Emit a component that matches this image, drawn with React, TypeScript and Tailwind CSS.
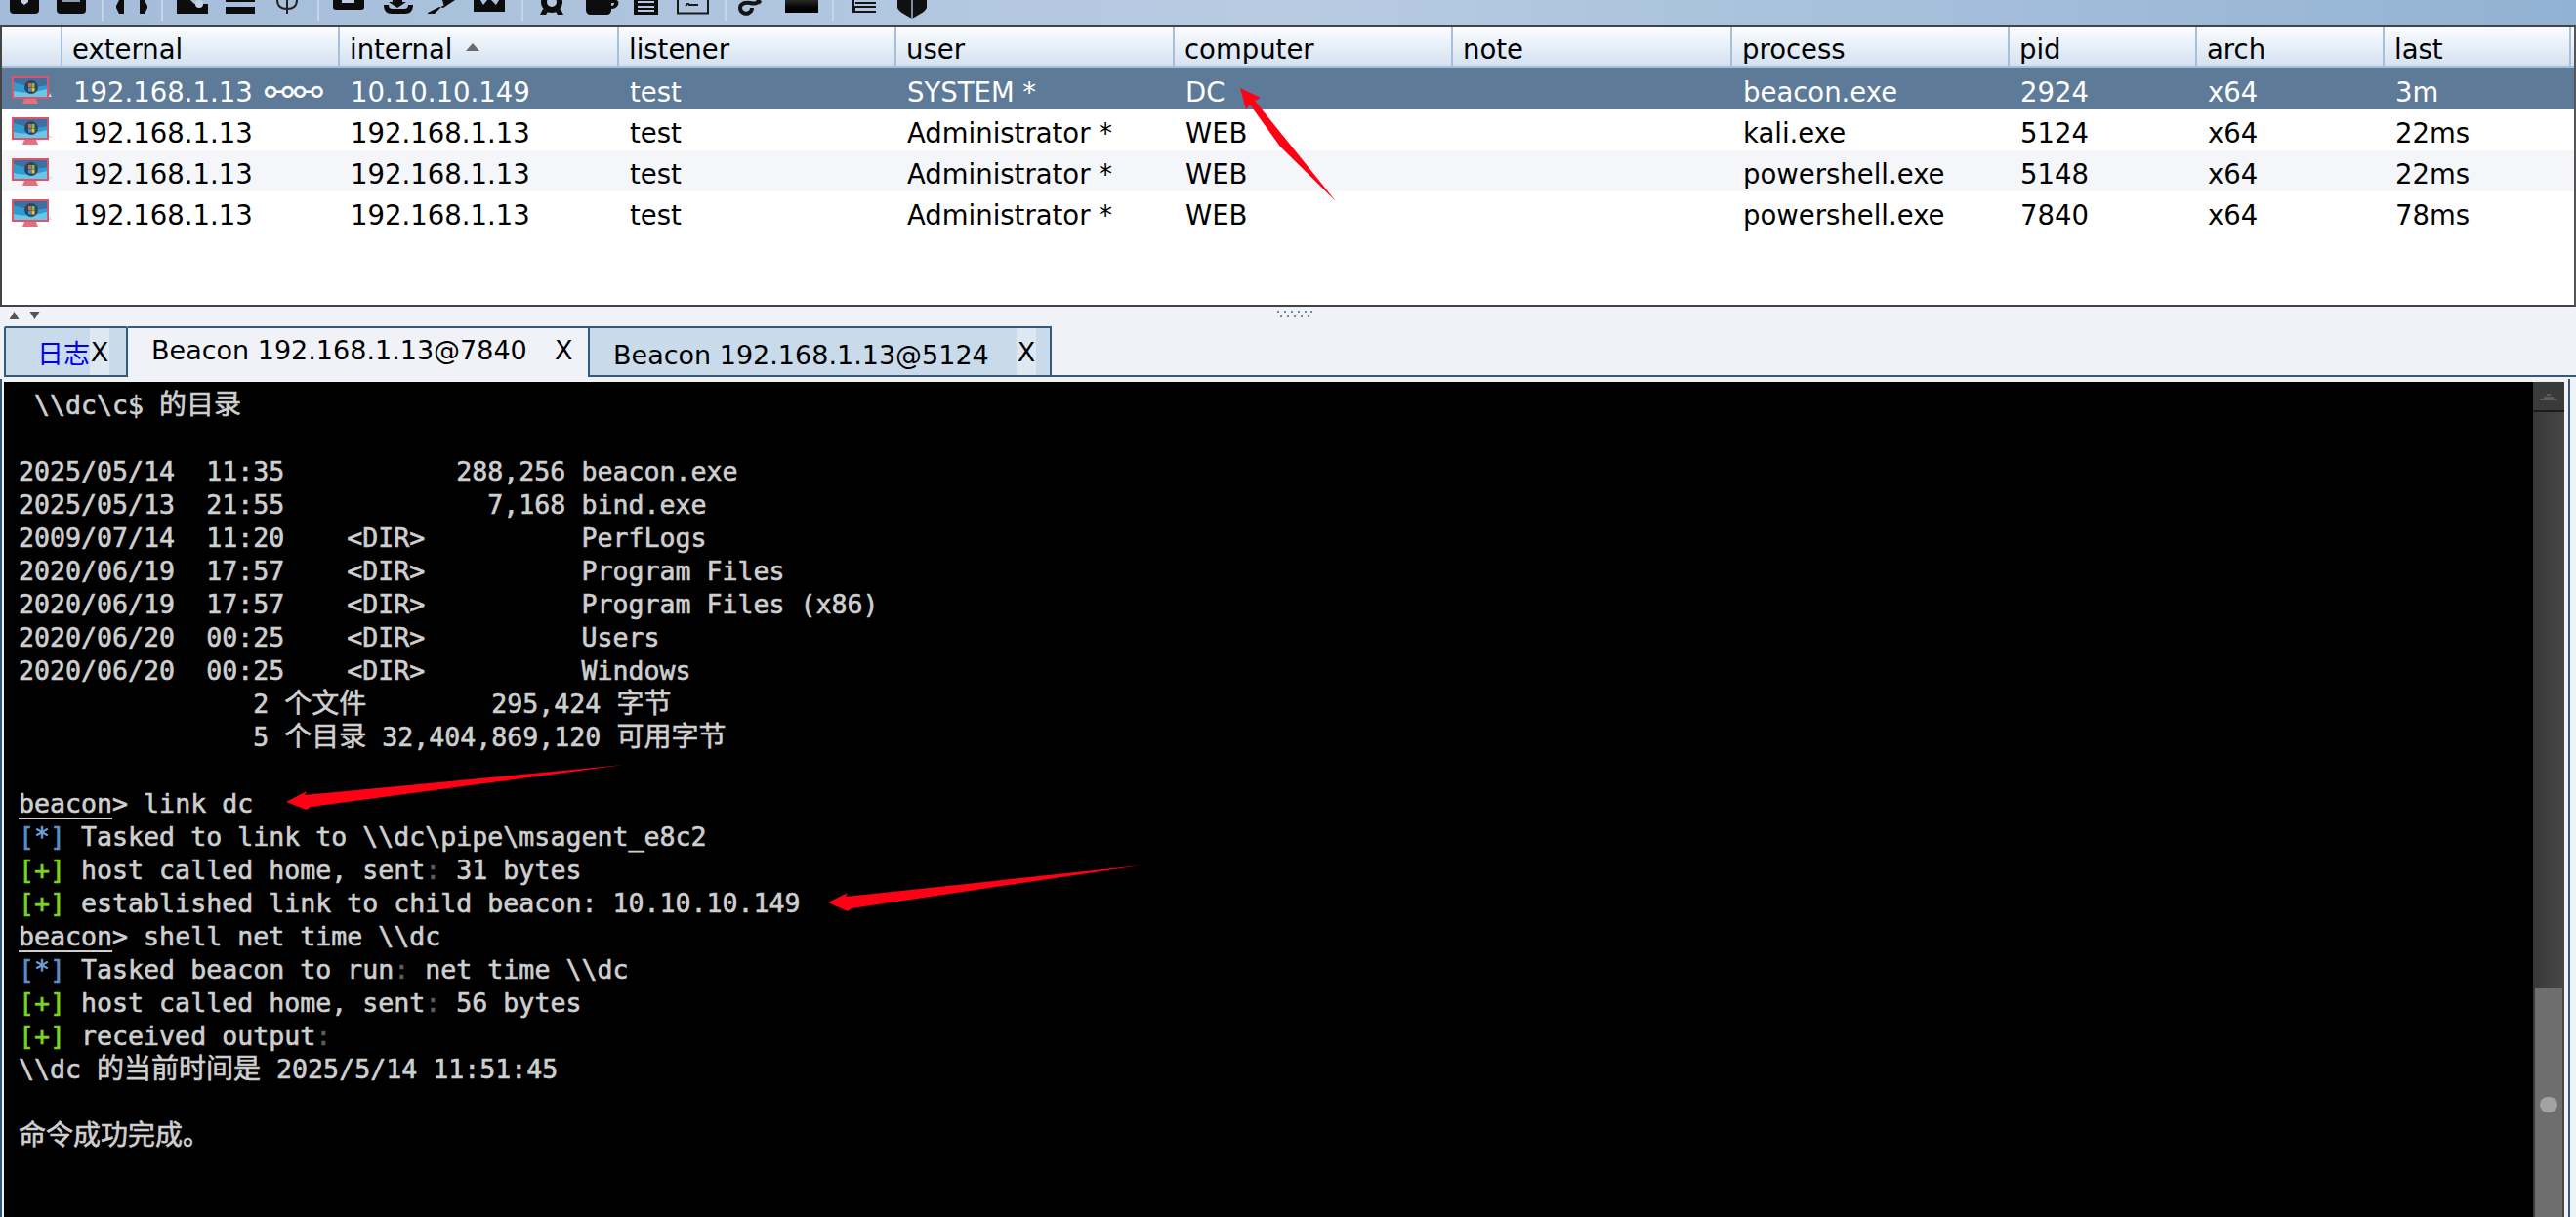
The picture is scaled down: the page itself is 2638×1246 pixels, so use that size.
import type { ReactNode } from "react";

const mono = "[font-family:'DejaVu_Sans_Mono','Noto_Sans_CJK_SC',monospace]";

const columns = [
  "external",
  "internal",
  "listener",
  "user",
  "computer",
  "note",
  "process",
  "pid",
  "arch",
  "last",
];

const sessions = [
  ["192.168.1.13", "10.10.10.149", "test", "SYSTEM *", "DC", "", "beacon.exe", "2924", "x64", "3m"],
  ["192.168.1.13", "192.168.1.13", "test", "Administrator *", "WEB", "", "kali.exe", "5124", "x64", "22ms"],
  ["192.168.1.13", "192.168.1.13", "test", "Administrator *", "WEB", "", "powershell.exe", "5148", "x64", "22ms"],
  ["192.168.1.13", "192.168.1.13", "test", "Administrator *", "WEB", "", "powershell.exe", "7840", "x64", "78ms"],
];

const gridCols =
  "grid-cols-[62px_284px_286px_284px_285px_285px_286px_284px_192px_192px_191px]";

function Zh({ children }: { children: ReactNode }) {
  return <span className="inline-block text-[28px] leading-[34px]">{children}</span>;
}

function Info() {
  return (
    <span className="text-[#5b8fc9]">
      [<span className="text-[#6fa3dc]">*</span>]
    </span>
  );
}

function Plus() {
  return <span className="text-[#7ed321]">[+]</span>;
}

function Dim() {
  return <span className="text-[#5c5c5c]">:</span>;
}

function Prompt() {
  return (
    <>
      <span className="underline decoration-2 underline-offset-[5px]">beacon</span>&gt;
    </>
  );
}

function Line({ children }: { children?: ReactNode }) {
  return <div className="h-[34px] whitespace-pre leading-[34px]">{children}</div>;
}

function MonitorIcon() {
  return (
    <svg width="42" height="32" viewBox="0 0 42 32" className="mt-[7px] ml-[9px]">
      <rect x="1" y="1" width="38" height="23" fill="#d9566b" />
      <rect x="3" y="3" width="34" height="19" fill="#2f9ccf" />
      <path d="M3 3h34v7c-10 3-22 1-34-3z" fill="#3f6f9f" />
      <path d="M3 16c12 3 24 1 34-2v8H3z" fill="#6cc4e6" />
      <circle cx="21" cy="12" r="7" fill="#2c4660" />
      <rect x="18" y="8" width="3" height="4" fill="#e3673a" />
      <rect x="21.500" y="8" width="3" height="4" fill="#8dbb3c" />
      <rect x="18" y="12.500" width="3" height="4" fill="#3e8fd6" />
      <rect x="21.500" y="12.500" width="3" height="4" fill="#eec23b" />
      <path d="M14 24h12l2 5H12z" fill="#e2707f" />
      <path d="M40 18l2 4h-3z" fill="#d8dee6" />
    </svg>
  );
}

function Toolbar() {
  return (
    <div className="flex h-[26px] shrink-0 items-start overflow-hidden bg-gradient-to-r from-[#a3bcd9] via-[#b8cbe3] to-[#92b2d3]">
      <svg width="30" height="26" className="ml-[10px]">
        <rect x="0" y="-8" width="30" height="22" rx="4" fill="#0c0c0c" />
        <path d="M11 0h8v2l-4 3-4-3z" fill="#c4d2e4" />
      </svg>
      <svg width="30" height="26" className="ml-[18px]">
        <rect x="0" y="-8" width="30" height="22" rx="4" fill="#0c0c0c" />
        <rect x="6" y="0" width="18" height="2" fill="#8c9bb0" />
      </svg>
      <div className="ml-[16px] h-[22px] w-[2px] bg-[#c6d5e6]" />
      <svg width="32" height="26" className="ml-[13px]">
        <path d="M0 6 3 0h5v14H3L0 8zM32 6l-3-6h-5v14h5l3-6z" fill="#0c0c0c" />
      </svg>
      <div className="ml-[14px] h-[22px] w-[2px] bg-[#c6d5e6]" />
      <svg width="32" height="26" className="ml-[14px]">
        <path d="M0 0h14l4 4h14v10H0z" fill="#0c0c0c" />
        <circle cx="23" cy="4" r="4" fill="#c4d2e4" />
      </svg>
      <svg width="30" height="26" className="ml-[18px]">
        <rect x="0" y="0" width="30" height="2" fill="#0c0c0c" />
        <rect x="0" y="7" width="30" height="7" fill="#0c0c0c" />
      </svg>
      <svg width="22" height="26" className="ml-[22px]">
        <path d="M1 0c0 6 4 9 10 9s10-3 10-9" fill="none" stroke="#222" strokeWidth="2" />
        <rect x="10" y="0" width="2" height="14" fill="#222" />
      </svg>
      <div className="ml-[20px] h-[22px] w-[2px] bg-[#c6d5e6]" />
      <svg width="32" height="26" className="ml-[14px]">
        <rect x="0" y="-10" width="32" height="20" rx="3" fill="#0c0c0c" />
        <rect x="9" y="0" width="13" height="3" fill="#c0d0e2" />
      </svg>
      <svg width="32" height="26" className="ml-[19px]">
        <path d="M10 0h10v2h4l-9 6-9-6h4z" fill="#0c0c0c" />
        <path d="M1 5c0 6 3 9 8 9h14c5 0 8-3 8-9h-5c0 3-2 4-4 4H10C8 9 6 8 6 5z" fill="#0c0c0c" />
      </svg>
      <svg width="30" height="26" className="ml-[13px]">
        <path d="M29 0 17 8l-4-1L1 13v1h7l8-8 5-1 8-5z" fill="#0c0c0c" />
        <path d="M16 0h13L18 7z" fill="#0c0c0c" />
      </svg>
      <svg width="32" height="26" className="ml-[18px]">
        <path d="M0 0h7l3 5 4-5h4l5 5 3-5h6v12H0z" fill="#0c0c0c" />
      </svg>
      <div className="ml-[17px] h-[22px] w-[2px] bg-[#c6d5e6]" />
      <svg width="34" height="26" className="ml-[12px]">
        <circle cx="17" cy="2" r="11" fill="#0c0c0c" />
        <circle cx="17" cy="2" r="5" fill="#b5c8e0" />
        <path d="M8 9l-3 6h6l2-3zM26 9l3 6h-6l-2-3z" fill="#0c0c0c" />
      </svg>
      <svg width="34" height="26" className="ml-[18px]">
        <path d="M0 0h26v10c0 3-2 5-5 5H5c-3 0-5-2-5-5z" fill="#0c0c0c" />
        <path d="M26 0h4c3 0 4 2 3 5-1 2-3 4-7 4V6c2 0 3-1 3-3h-3z" fill="#0c0c0c" />
      </svg>
      <svg width="25" height="26" className="ml-[15px]">
        <rect x="0" y="0" width="25" height="15" fill="#0c0c0c" />
        <rect x="4" y="1" width="17" height="2" fill="#b5c8e0" />
        <rect x="4" y="6" width="17" height="2" fill="#b5c8e0" />
        <rect x="4" y="10" width="17" height="2" fill="#b5c8e0" />
      </svg>
      <svg width="33" height="26" className="ml-[19px]">
        <rect x="1" y="-4" width="31" height="17.500" fill="none" stroke="#1a1a1a" strokeWidth="2" />
        <path d="M9 4h2l-2 2M12 5h10" fill="none" stroke="#1a1a1a" strokeWidth="2" />
      </svg>
      <div className="ml-[16px] h-[22px] w-[2px] bg-[#c6d5e6]" />
      <svg width="26" height="26" className="ml-[11px]">
        <path d="M22 0c-1 4-5 4-9 3C8 2 3 4 3 8c0 5 6 7 9 5 2-1 3-3 3-5M20 0l4 3" fill="none" stroke="#141414" strokeWidth="4" />
      </svg>
      <div className="ml-[23px] h-[13px] w-[34px] bg-gradient-to-b from-[#2a2a2a] to-black" />
      <div className="ml-[14px] h-[22px] w-[2px] bg-[#c6d5e6]" />
      <svg width="24" height="26" className="ml-[19px]">
        <path d="M0 6h24v2H3v3h21v2H0zM0 0h2v6H0z" fill="#141414" />
        <rect x="3" y="2" width="21" height="2" fill="#141414" />
      </svg>
      <svg width="30" height="26" className="ml-[22px]">
        <path d="M0 0h30v7c0 4-6 7-15 12C6 14 0 11 0 7z" fill="#101010" />
        <rect x="14" y="0" width="2" height="19" fill="#7f8ea3" />
      </svg>
    </div>
  );
}

function SessionTable() {
  return (
    <div className="h-[288px] shrink-0 border-x-2 border-y-2 border-x-[#444444] border-y-[#444444] border-r-[#555555] bg-white text-[27.5px] [font-family:'DejaVu_Sans',sans-serif]">
      <div className={`grid h-[42px] ${gridCols} border-b-2 border-[#a6bfd9] bg-gradient-to-b from-[#fbfcff] to-[#d3e1f0] text-black`}>
        <div className="border-r-2 border-[#a6c0dc]" />
        {columns.map((c) => (
          <div key={c} className="flex items-center border-r-2 border-[#a6c0dc] pt-[6px] pl-[10px] leading-none">
            {c}
            {c === "internal" && (
              <svg width="16" height="10" viewBox="0 0 16 10" className="ml-[12px] mb-[6px]">
                <path d="M8 1l7 8H1z" fill="#6a6a6a" />
              </svg>
            )}
          </div>
        ))}
      </div>
      {sessions.map((row, i) => (
        <div
          key={row[7]}
          className={`grid h-[42px] ${gridCols} ${
            i === 0 ? "bg-[#5e7a99] text-white" : i === 2 ? "bg-[#f5f6f9] text-black" : "bg-white text-black"
          }`}
        >
          <MonitorIcon />
          {row.map((cell, j) => (
            <div key={j} className="flex items-center whitespace-pre pt-[7px] pl-[11px] leading-none">
              {cell}
              {i === 0 && j === 0 && <span className="ml-[12px] text-[36px] leading-none">⚯⚯</span>}
            </div>
          ))}
        </div>
      ))}
    </div>
  );
}

function Sash() {
  return (
    <div className="relative flex h-[20px] shrink-0 items-center gap-[8px] pb-[3px] pl-[8px]">
      <svg width="13" height="8" viewBox="0 0 13 8">
        <path d="M6.500 0l5 8h-10z" fill="#555" />
      </svg>
      <svg width="13" height="8" viewBox="0 0 13 8">
        <path d="M6.500 8l5-8h-10z" fill="#555" />
      </svg>
      <svg width="36" height="8" viewBox="0 0 36 8" className="ml-[1258px] mb-[1px]">
        <path d="M1 0v2M8 0v2M15 0v2M22 0v2M29 0v2M35 0v2M4 5v2M11 5v2M18 5v2M25 5v2M32 5v2" stroke="#6e86a6" strokeWidth="2" />
      </svg>
    </div>
  );
}

function CloseX({ className }: { className: string }) {
  return (
    <span className={`absolute top-0 bottom-0 flex items-center justify-center bg-[#dde8f2] pt-[2px] ${className}`}>X</span>
  );
}

function Tabs() {
  return (
    <div className="flex h-[52px] shrink-0 items-end border-b-0 pl-[4px] text-[27px] [font-family:'DejaVu_Sans',sans-serif]">
      <div className="relative h-[52px] w-[127px] border-2 border-[#35597b] bg-[#c9dbea] leading-[52px] rounded-t-[2px]">
        <span className="absolute top-[-1px] left-[32px] text-[#0000ee] [font-family:'Noto_Sans_CJK_SC',sans-serif]">日志</span>
        <CloseX className="left-[86px] w-[20px]" />
      </div>
      <div className="relative h-[52px] w-[471px] border-t-2 border-[#35597b] bg-[#f0f2f8]">
        <span className="absolute top-[3px] left-[24px] whitespace-pre">Beacon 192.168.1.13@7840</span>
        <span className="absolute top-[3px] left-[437px]">X</span>
      </div>
      <div className="relative h-[52px] w-[475px] border-2 border-[#35597b] bg-[#c9dbea]">
        <span className="absolute top-[8px] left-[24px] whitespace-pre">Beacon 192.168.1.13@5124</span>
        <CloseX className="left-[437px] w-[20px]" />
      </div>
      <div className="h-[2px] flex-1 bg-[#35597b]" />
    </div>
  );
}

function Terminal() {
  return (
    <div className={`h-[856px] overflow-hidden whitespace-pre pl-[15px] text-[26.6px] text-[#cfcfcf] [-webkit-text-stroke-width:0.6px] ${mono}`}>
      <div className="pt-[7px]">
        <Line> \\dc\c$ <Zh>的目录</Zh></Line>
        <Line />
        <Line>2025/05/14  11:35           288,256 beacon.exe</Line>
        <Line>2025/05/13  21:55             7,168 bind.exe</Line>
        <Line>2009/07/14  11:20    &lt;DIR&gt;          PerfLogs</Line>
        <Line>2020/06/19  17:57    &lt;DIR&gt;          Program Files</Line>
        <Line>2020/06/19  17:57    &lt;DIR&gt;          Program Files (x86)</Line>
        <Line>2020/06/20  00:25    &lt;DIR&gt;          Users</Line>
        <Line>2020/06/20  00:25    &lt;DIR&gt;          Windows</Line>
        <Line>               2 <Zh>个文件</Zh>        295,424 <Zh>字节</Zh></Line>
        <Line>               5 <Zh>个目录</Zh> 32,404,869,120 <Zh>可用字节</Zh></Line>
        <Line />
        <Line><Prompt /> link dc</Line>
        <Line><Info /> Tasked to link to \\dc\pipe\msagent_e8c2</Line>
        <Line><Plus /> host called home, sent<Dim /> 31 bytes</Line>
        <Line><Plus /> established link to child beacon: 10.10.10.149</Line>
        <Line><Prompt /> shell net time \\dc</Line>
        <Line><Info /> Tasked beacon to run<Dim /> net time \\dc</Line>
        <Line><Plus /> host called home, sent<Dim /> 56 bytes</Line>
        <Line><Plus /> received output<Dim /></Line>
        <Line>\\dc <Zh>的当前时间是</Zh> 2025/5/14 11:51:45</Line>
        <Line />
        <Line><Zh>命令成功完成。</Zh></Line>
      </div>
    </div>
  );
}

function Scrollbar() {
  return (
    <div className="flex w-[32px] shrink-0 flex-col bg-gradient-to-r from-[#383838] to-[#474747]">
      <div className="flex h-[31px] shrink-0 items-center justify-center border-b-2 border-[#1c1c1c] bg-[#3a3a3a]">
        <svg width="18" height="8" viewBox="0 0 18 8">
          <path d="M0 7h18M4 5h10M7 2h4" stroke="#6a6a6a" strokeWidth="1.500" />
        </svg>
      </div>
      <div className="flex-1" />
      <div className="mx-[2px] flex h-[235px] shrink-0 items-start justify-center bg-[#6e6e6e] pt-[111px]">
        <div className="h-[16px] w-[18px] rounded-full bg-[#a2a2a2]" />
      </div>
    </div>
  );
}

function Arrows() {
  return (
    <svg width="2638" height="1246" className="pointer-events-none absolute top-0 left-0">
      <path d="M1270 90 1291 100 1285 103 1368 206 1311 150 1280 107 1276 112z" fill="#ff0014" />
      <path d="M293 821 314 810 312 814 639 783 318 826 314 829z" fill="#ff0014" />
      <path d="M848 924 868 914 866 918 1168 886 872 930 868 933z" fill="#ff0014" />
    </svg>
  );
}

export default function App() {
  return (
    <div className="relative flex h-[1246px] w-[2638px] flex-col overflow-hidden bg-[#f0f2f8]">
      <Toolbar />
      <SessionTable />
      <Sash />
      <Tabs />
      <div className="flex flex-1 pt-[2px] pr-[6px]">
        <div className="flex flex-1 border-x-2 border-[#35597b] bg-[#f0f2f8] pt-[3px] pr-[4px] pl-[2px]">
          <div className="flex-1 bg-black">
            <Terminal />
          </div>
          <Scrollbar />
        </div>
      </div>
      <Arrows />
    </div>
  );
}
